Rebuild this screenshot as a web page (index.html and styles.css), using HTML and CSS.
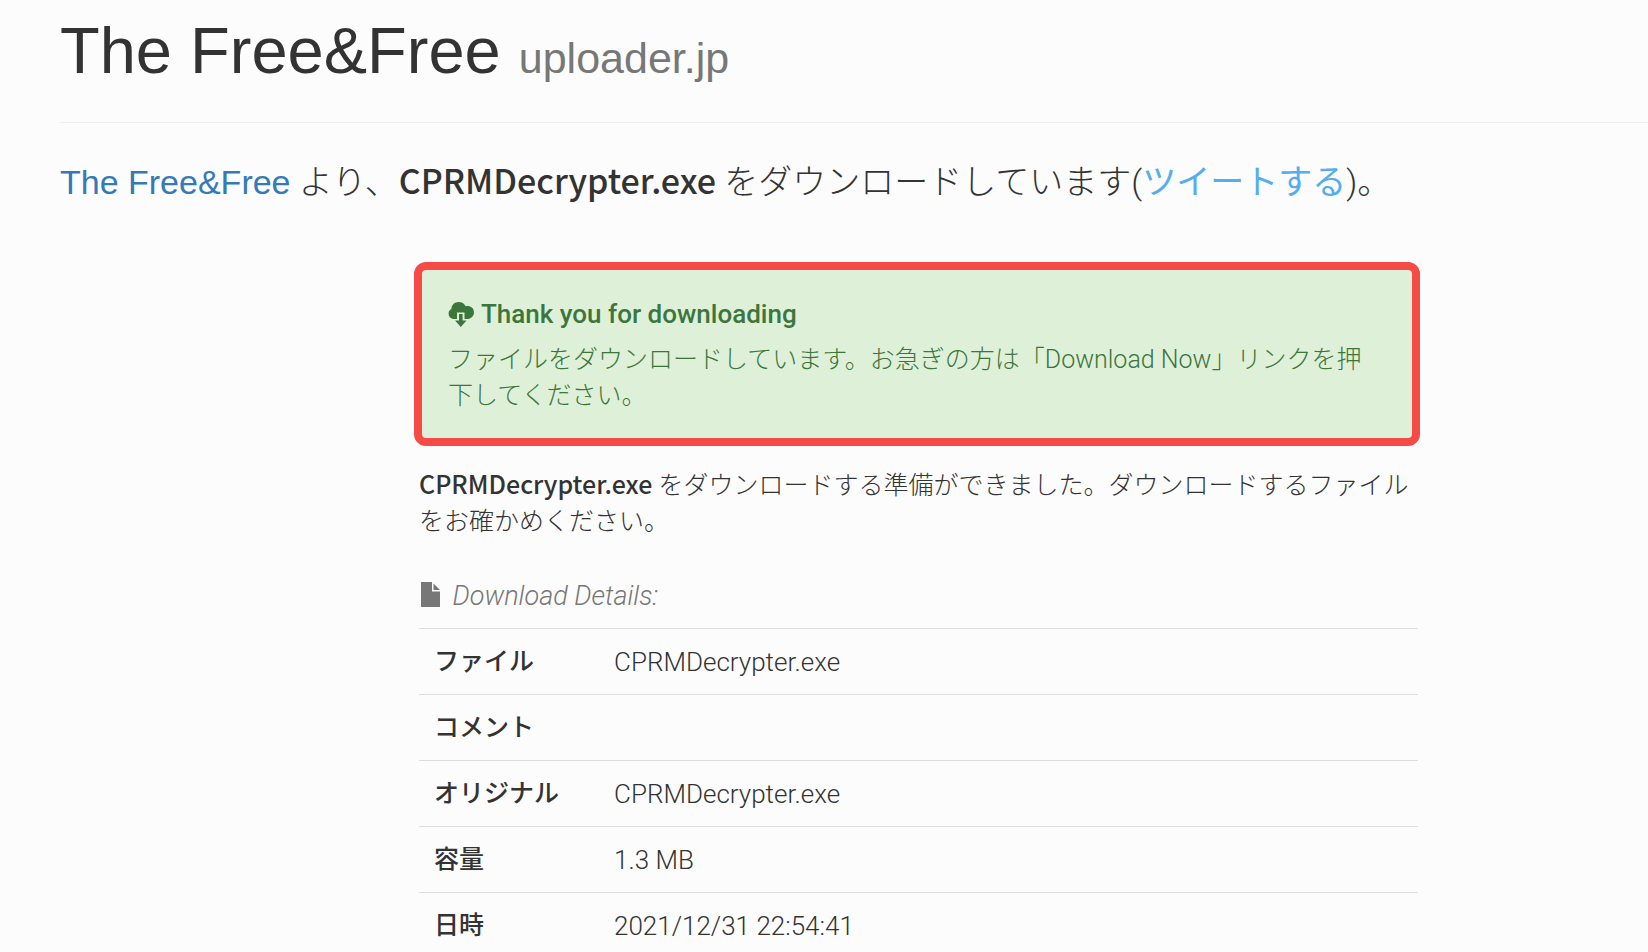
FILE: index.html
```html
<!DOCTYPE html>
<html lang="ja">
<head>
    <meta charset="UTF-8">
    <meta name="viewport" content="width=device-width, initial-scale=1.0">
    <title>The Free&amp;Free - uploader.jp</title>
    <link rel="stylesheet" href="styles.css">
</head>
<body>
    <div class="container">
        <header class="page-header">
            <h1>The Free&amp;Free <small>uploader.jp</small></h1>
        </header>

        <p class="lead"><a href="#">The Free&amp;Free</a> より、<strong>CPRMDecrypter.exe</strong> をダウンロードしています(<a class="tweet" href="#">ツイートする</a>)。</p>

        <div class="row">
            <main class="content">
                <div class="alert">
                    <h2>
                        <svg class="icon-cloud" viewBox="0 0 26 25" aria-hidden="true">
                            <path d="M5 17A5.3 5.3 0 0 1 3.400 7.100C3.500 2.800 6.600 0 10.700 0c3.100 0 5.700 1.600 7 4.200 4.200-1 8.300 1.700 8.300 6 0 3.600-2.500 6.200-6 6.800h-3.500V10.500H9V17z"/>
                            <path d="M11 12h3.600v6.500H18.500L12.800 25 7 18.500h4z"/>
                        </svg>
                        Thank you for downloading
                    </h2>
                    <p>ファイルをダウンロードしています。お急ぎの方は「Download Now」リンクを押下してください。</p>
                </div>

                <p class="ready"><strong>CPRMDecrypter.exe</strong> をダウンロードする準備ができました。ダウンロードするファイルをお確かめください。</p>

                <!-- ファイル情報 -->
                <table class="details">
                    <caption>
                        <svg class="icon-file" viewBox="0 0 19 25" aria-hidden="true">
                            <path d="M0 0h11v9.500h8V25H0z"/>
                            <path d="M12.500 1.500L19 8h-6.500z"/>
                        </svg>
                        <em>Download Details:</em>
                    </caption>
                    <tbody>
                        <tr>
                            <th scope="row">ファイル</th>
                            <td>CPRMDecrypter.exe</td>
                        </tr>
                        <tr>
                            <th scope="row">コメント</th>
                            <td></td>
                        </tr>
                        <tr>
                            <th scope="row">オリジナル</th>
                            <td>CPRMDecrypter.exe</td>
                        </tr>
                        <tr>
                            <th scope="row">容量</th>
                            <td>1.3 MB</td>
                        </tr>
                        <tr>
                            <th scope="row">日時</th>
                            <td>2021/12/31 22:54:41</td>
                        </tr>
                    </tbody>
                </table>
            </main>
        </div>
    </div>
</body>
</html>
```
FILE: styles.css
```css
* {
    box-sizing: border-box;
    margin: 0;
    padding: 0;
}

body {
    background-color: #fcfcfc;
    color: #333333;
    font-family: Roboto, "Noto Sans CJK JP", sans-serif;
    font-size: 25px;
    font-weight: 300;
    line-height: 36px;
    overflow: hidden;
}

strong,
th {
    font-weight: 500;
}

strong {
    font-family: "Noto Sans CJK JP", sans-serif;
    line-height: 1;
}

a {
    color: #337ab7;
    text-decoration: none;
}

.container {
    padding-left: 60px;
}

.page-header {
    padding: 16px 0 36px;
    border-bottom: 1px solid #eeeeee;
}

h1 {
    font-family: "Liberation Sans", sans-serif;
    font-size: 65px;
    font-weight: 400;
    line-height: 70px;
}

h1 small {
    color: #777777;
    font-size: 43px;
    line-height: 1;
}

.lead {
    margin-top: 34px;
    font-size: 34px;
    line-height: 50px;
}

.lead a {
    font-family: "Liberation Sans", "Noto Sans CJK JP", sans-serif;
    font-weight: 400;
    line-height: 1;
}

.lead .tweet {
    color: #55acee;
}

.row {
    display: grid;
    grid-template-columns: 354fr 1006fr 228fr;
    margin-top: 55px;
}

.content {
    grid-column: 2;
}

.alert {
    padding: 26px 26px 24px;
    background-color: #dff0d8;
    border: 8px solid #f54a45;
    border-radius: 12px;
    color: #3c763d;
}

.alert h2 {
    display: flex;
    align-items: center;
    gap: 7px;
    margin-bottom: 10px;
    font-size: 26px;
    font-weight: 500;
    line-height: 36px;
}

.icon-cloud {
    width: 26px;
    height: 25px;
    fill: currentColor;
}

.ready {
    margin: 22px 5px 0;
}

.details {
    width: calc(100% - 7px);
    margin: 38px 0 0 5px;
    border-collapse: collapse;
}

.details caption {
    padding-bottom: 14px;
    color: #777777;
    font-size: 27px;
    text-align: left;
}

.icon-file {
    width: 19px;
    height: 25px;
    margin: 0 6px 0 2px;
    fill: currentColor;
    vertical-align: -2px;
}

.details th,
.details td {
    height: 66px;
    padding: 0 15px;
    border-top: 1px solid #dddddd;
    text-align: left;
}

.details th {
    width: 180px;
}

.details td {
    font-size: 26px;
}
```
